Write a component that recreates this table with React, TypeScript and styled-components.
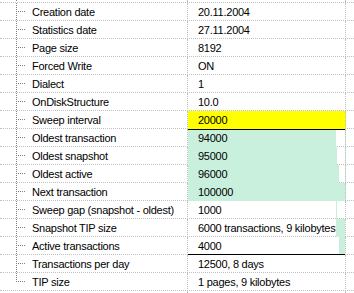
import React, { FC } from "react";
import styled, { createGlobalStyle } from "styled-components";

const GRID = '#c0c0c0';
const TREE = '#808080';
const BAR = '#c8f0dc';
const MAX = 100000;

const GlobalStyle = createGlobalStyle`
    html, body {
        margin: 0;
        padding: 0;
        background: #fff;
        overflow: hidden;
    }
    body {
        font-family: "Liberation Sans", Arial, sans-serif;
        font-size: 11px;
        letter-spacing: -0.25px;
        color: #000;
    }
`;

const List = styled.div`
    width: 354px;
    height: 293px;
    overflow: hidden;
    display: flex;
    flex-direction: column;
`;

interface RowProps {
    $h?: number;
    $open?: boolean;
}

const Row = styled.div<RowProps>`
    display: grid;
    grid-template-columns: 188px 158px 1fr;
    flex: none;
    height: ${props => props.$h ?? 18}px;
    box-sizing: border-box;
    border-bottom: ${props => props.$open ? 'none' : `1px dotted ${GRID}`};
`;

const NameCell = styled.div`
    display: flex;
    align-items: stretch;
    box-sizing: border-box;
    border-right: 1px dotted ${GRID};
    white-space: nowrap;
`;

const dots = (dir: string) => `repeating-linear-gradient(${dir}, ${TREE} 0 1px, transparent 1px 2px)`;

interface GuideProps {
    $branch?: boolean;
    $last?: boolean;
}

const Guide = styled.span<GuideProps>`
    flex: none;
    width: 32px;
    background-image: ${props => props.$branch ? `${dots('to bottom')}, ${dots('to right')}` : dots('to bottom')};
    background-repeat: no-repeat;
    background-position: 16px 0, 18px 8px;
    background-size: 1px ${props => props.$last ? '9px' : '100%'}, 8px 1px;
`;

const Label = styled.span`
    padding-top: 1px;
    line-height: 17px;
`;

interface ValueProps {
    $tone?: 'yellow';
    $bar?: [number, number];
    $edge?: 'top' | 'bottom';
}

const barFill = (bar?: [number, number]) => {
    if (!bar) return 'none';
    const a = (bar[0] / MAX) * 100;
    const b = (bar[1] / MAX) * 100;
    return `linear-gradient(to right, transparent ${a}%, ${BAR} ${a}%, ${BAR} ${b}%, transparent ${b}%)`;
};

const ValueCell = styled.div<ValueProps>`
    box-sizing: border-box;
    padding: 1px 0 0 10px;
    line-height: 17px;
    white-space: nowrap;
    border-right: 1px dotted ${GRID};
    background-color: ${props => props.$tone === 'yellow' ? '#ffff00' : 'transparent'};
    background-image: ${props => barFill(props.$bar)};
    box-shadow: ${props => props.$edge === 'top' ? 'inset 0 1px 0 #000' : props.$edge === 'bottom' ? 'inset 0 -1px 0 #000' : 'none'};
`;

interface Stat {
    name: string;
    value: string;
    tone?: 'yellow';
    bar?: [number, number];
    edge?: 'top' | 'bottom';
}

const stats: Stat[] = [
    {name: 'Creation date', value: '20.11.2004'},
    {name: 'Statistics date', value: '27.11.2004'},
    {name: 'Page size', value: '8192'},
    {name: 'Forced Write', value: 'ON'},
    {name: 'Dialect', value: '1'},
    {name: 'OnDiskStructure', value: '10.0'},
    {name: 'Sweep interval', value: '20000', tone: 'yellow'},
    {name: 'Oldest transaction', value: '94000', bar: [0, 94000], edge: 'top'},
    {name: 'Oldest snapshot', value: '95000', bar: [0, 95000]},
    {name: 'Oldest active', value: '96000', bar: [0, 96000]},
    {name: 'Next transaction', value: '100000', bar: [0, 100000]},
    {name: 'Sweep gap (snapshot - oldest)', value: '1000', bar: [94000, 95000]},
    {name: 'Snapshot TIP size', value: '6000 transactions, 9 kilobytes', bar: [94000, 100000]},
    {name: 'Active transactions', value: '4000', bar: [96000, 100000], edge: 'bottom'},
    {name: 'Transactions per day', value: '12500, 8 days'},
    {name: 'TIP size', value: '1 pages, 9 kilobytes'},
];

const App: FC = () => {
    return <>
        <GlobalStyle />
        <List>
            <Row $h={3}>
                <NameCell><Guide /></NameCell>
                <ValueCell />
            </Row>
            {stats.map((stat, i) => {
                return <Row key={stat.name}>
                    <NameCell>
                        <Guide $branch $last={i === stats.length - 1} />
                        <Label>{stat.name}</Label>
                    </NameCell>
                    <ValueCell $tone={stat.tone} $bar={stat.bar} $edge={stat.edge}>{stat.value}</ValueCell>
                </Row>;
            })}
            <Row $h={4} $open>
                <NameCell />
                <ValueCell />
            </Row>
        </List>
    </>;
};

export default App;
